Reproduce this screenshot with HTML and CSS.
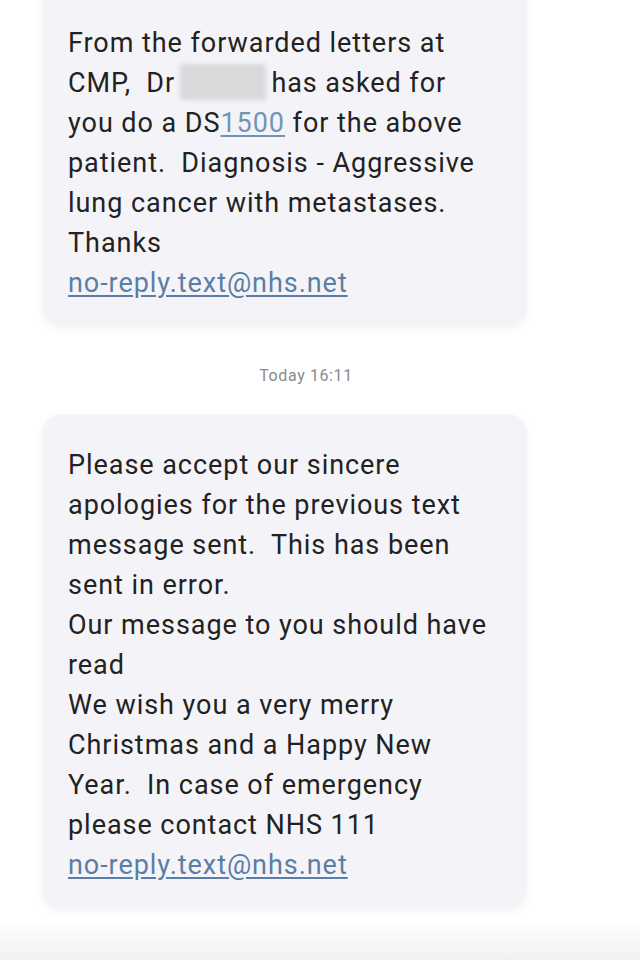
FILE: index.html
```html
<!DOCTYPE html>
<html lang="en">
<head>
    <meta charset="UTF-8">
    <meta name="viewport" content="width=device-width, initial-scale=1.0">
    <title>Messages</title>
    <link rel="stylesheet" href="styles.css">
</head>
<body>
    <div class="thread">
        <div class="bubble first">
            <p>From the forwarded letters at<br>
            CMP,&nbsp; Dr <span class="redacted"></span> has asked for<br>
            you do a DS<a href="#" class="num">1500</a> for the above<br>
            patient.&nbsp; Diagnosis - Aggressive<br>
            lung cancer with metastases.<br>
            Thanks<br>
            <a href="#">no-reply.text@nhs.net</a></p>
        </div>

        <div class="stamp">Today 16:11</div>

        <div class="bubble">
            <p>Please accept our sincere<br>
            apologies for the previous text<br>
            message sent.&nbsp; This has been<br>
            sent in error.<br>
            Our message to you should have<br>
            read<br>
            We wish you a very merry<br>
            Christmas and a Happy New<br>
            Year.&nbsp; In case of emergency<br>
            please contact NHS 111<br>
            <a href="#">no-reply.text@nhs.net</a></p>
        </div>
    </div>
    <div class="bottom-bar"></div>
</body>
</html>
```

FILE: styles.css
```css
body {
    margin: 0;
    background: #fff;
    font-family: Roboto, "Noto Sans", sans-serif;
    height: 960px;
    overflow: hidden;
    position: relative;
}

.thread {
    padding: 0 113px 0 42px;
}

.bubble {
    background: #f4f4f8;
    border-radius: 20px;
    padding: 31px 26px 24px;
    box-shadow: 0 3px 8px rgba(0, 0, 0, 0.05);
}

.bubble.first {
    margin-top: -20px;
    padding-top: 43px;
    padding-bottom: 23px;
}

.bubble p {
    margin: 0;
    font-size: 27px;
    line-height: 40px;
    letter-spacing: 0.95px;
    color: #222;
}

.bubble a {
    color: #5b7ea6;
    text-decoration: underline;
    text-underline-offset: 3px;
}

.bubble a.num {
    color: #6f95b8;
}

.redacted {
    display: inline-block;
    width: 86px;
    height: 36px;
    vertical-align: -8px;
    background: #d9d9db;
    filter: blur(2px);
    margin: 0 -2px 0 -3px;
}

.stamp {
    text-align: center;
    font-size: 16px;
    letter-spacing: 0.6px;
    color: #8a8a8a;
    padding: 40px 0 29px;
    margin-right: -43px;
}

.bottom-bar {
    position: absolute;
    left: 0;
    right: 0;
    bottom: 0;
    height: 40px;
    background: linear-gradient(#fff, #f1f1f1);
}
```
